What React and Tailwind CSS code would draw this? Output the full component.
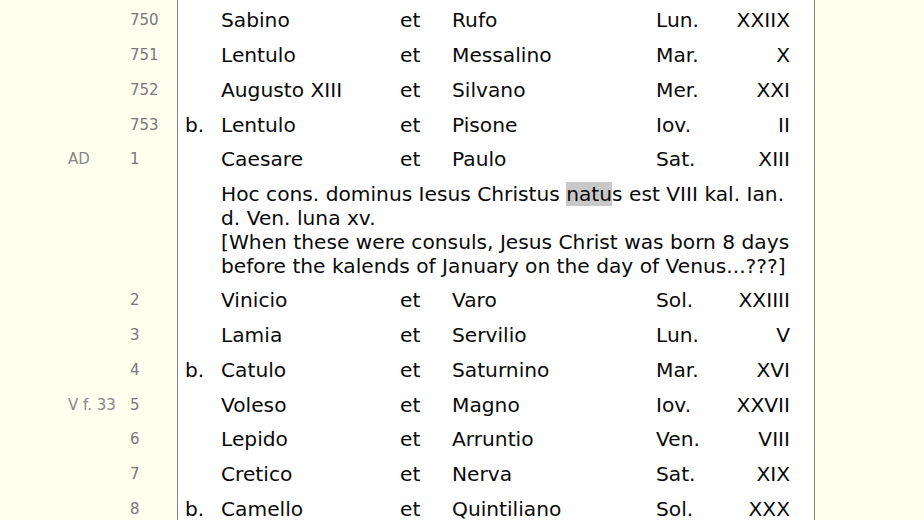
import React from 'react';

const rowsBefore = [
    { year: '750', b: '', a: 'Sabino', c: 'Rufo', day: 'Lun.', num: 'XXIIX' },
    { year: '751', b: '', a: 'Lentulo', c: 'Messalino', day: 'Mar.', num: 'X' },
    { year: '752', b: '', a: 'Augusto XIII', c: 'Silvano', day: 'Mer.', num: 'XXI' },
    { year: '753', b: 'b.', a: 'Lentulo', c: 'Pisone', day: 'Iov.', num: 'II' },
    { year: '1', b: '', a: 'Caesare', c: 'Paulo', day: 'Sat.', num: 'XIII', note: 'AD' },
];

const rowsAfter = [
    { year: '2', b: '', a: 'Vinicio', c: 'Varo', day: 'Sol.', num: 'XXIIII' },
    { year: '3', b: '', a: 'Lamia', c: 'Servilio', day: 'Lun.', num: 'V' },
    { year: '4', b: 'b.', a: 'Catulo', c: 'Saturnino', day: 'Mar.', num: 'XVI' },
    { year: '5', b: '', a: 'Voleso', c: 'Magno', day: 'Iov.', num: 'XXVII', note: 'V f. 33' },
    { year: '6', b: '', a: 'Lepido', c: 'Arruntio', day: 'Ven.', num: 'VIII' },
    { year: '7', b: '', a: 'Cretico', c: 'Nerva', day: 'Sat.', num: 'XIX' },
    { year: '8', b: 'b.', a: 'Camello', c: 'Quintiliano', day: 'Sol.', num: 'XXX' },
];

function ConsulRow({ row }) {
    return (
        <div className="grid grid-cols-[177px_44px_179px_52px_204px_74px_60px] items-center h-[34.8px]">
            <div className="flex items-center h-full">
                <span className="w-[130px] pl-[68px] text-[15px] text-[#888]">{row.note}</span>
                <span className="text-[15px] text-[#777]">{row.year}</span>
            </div>
            <span className="pl-[8px]">{row.b}</span>
            <span>{row.a}</span>
            <span>et</span>
            <span>{row.c}</span>
            <span>{row.day}</span>
            <span className="text-right">{row.num}</span>
        </div>
    );
}

export default function App() {
    return (
        <div className="min-h-[520px] bg-[#fffff0] text-[#0a0a0a] text-[20.2px] pt-[3px] overflow-hidden" style={{ fontFamily: '"DejaVu Sans", sans-serif' }}>
            <div className="relative">
                <div className="absolute top-[-3px] bottom-0 left-[177px] w-[638px] bg-white border-x border-[#888]" />
                <div className="relative">
                    {rowsBefore.map(r => <ConsulRow key={r.year} row={r} />)}
                    <div className="grid grid-cols-[221px_590px] py-[5px]">
                        <div />
                        <p className="leading-[24px]">
                            Hoc cons. dominus Iesus Christus <span className="bg-[#c8c8c8]">natu</span>s est VIII kal. Ian.<br />
                            d. Ven. luna xv.<br />
                            [When these were consuls, Jesus Christ was born 8 days<br />
                            before the kalends of January on the day of Venus...???]
                        </p>
                    </div>
                    {rowsAfter.map(r => <ConsulRow key={r.year} row={r} />)}
                </div>
            </div>
        </div>
    );
}
